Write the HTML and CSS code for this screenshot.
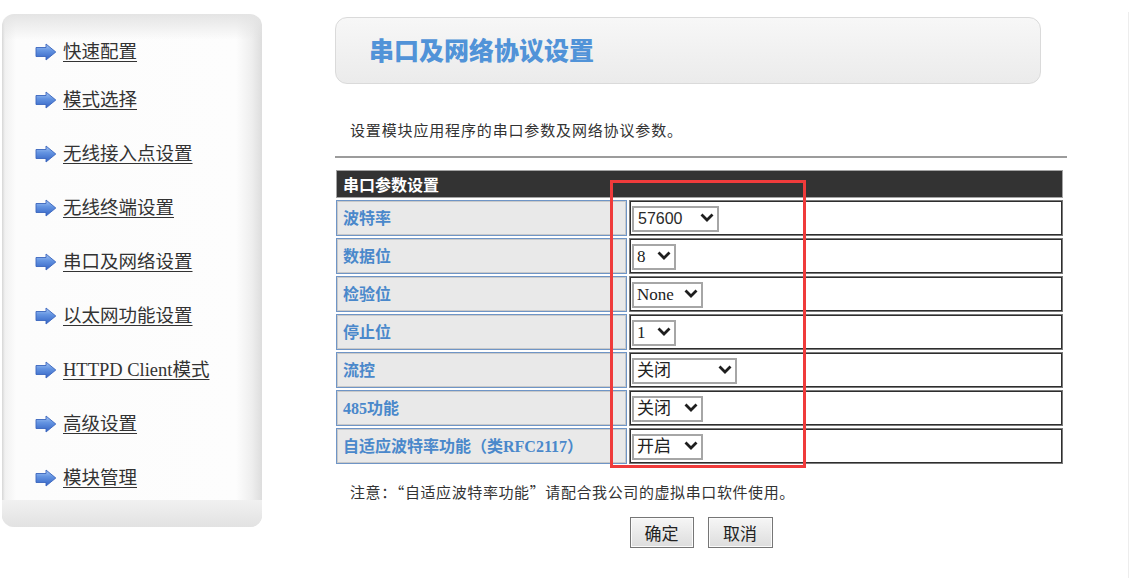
FILE: index.html
```html
<!DOCTYPE html>
<html lang="zh-CN">
<head>
<meta charset="utf-8">
<title>串口及网络协议设置</title>
<link rel="stylesheet" href="styles.css">
</head>
<body>
<svg class="defs" width="0" height="0" aria-hidden="true">
  <defs>
    <linearGradient id="arrowGrad" x1="0" y1="0" x2="0" y2="1">
      <stop offset="0" stop-color="#a6c6f4"/>
      <stop offset="0.4" stop-color="#6595e2"/>
      <stop offset="1" stop-color="#3262c4"/>
    </linearGradient>
  </defs>
</svg>
<div class="page">
  <aside class="sidebar">
    <ul class="nav">
      <li class="first"><a href="#"><svg class="arrow" viewBox="0 0 22 18"><path d="M1 4.5H11V1L20.8 9L11 17V13.5H1Z" fill="url(#arrowGrad)" stroke="#3a65bd" stroke-width="0.9" stroke-linejoin="round"/></svg><span>快速配置</span></a></li>
      <li><a href="#"><svg class="arrow" viewBox="0 0 22 18"><path d="M1 4.5H11V1L20.8 9L11 17V13.5H1Z" fill="url(#arrowGrad)" stroke="#3a65bd" stroke-width="0.9" stroke-linejoin="round"/></svg><span>模式选择</span></a></li>
      <li><a href="#"><svg class="arrow" viewBox="0 0 22 18"><path d="M1 4.5H11V1L20.8 9L11 17V13.5H1Z" fill="url(#arrowGrad)" stroke="#3a65bd" stroke-width="0.9" stroke-linejoin="round"/></svg><span>无线接入点设置</span></a></li>
      <li><a href="#"><svg class="arrow" viewBox="0 0 22 18"><path d="M1 4.5H11V1L20.8 9L11 17V13.5H1Z" fill="url(#arrowGrad)" stroke="#3a65bd" stroke-width="0.9" stroke-linejoin="round"/></svg><span>无线终端设置</span></a></li>
      <li><a href="#"><svg class="arrow" viewBox="0 0 22 18"><path d="M1 4.5H11V1L20.8 9L11 17V13.5H1Z" fill="url(#arrowGrad)" stroke="#3a65bd" stroke-width="0.9" stroke-linejoin="round"/></svg><span>串口及网络设置</span></a></li>
      <li><a href="#"><svg class="arrow" viewBox="0 0 22 18"><path d="M1 4.5H11V1L20.8 9L11 17V13.5H1Z" fill="url(#arrowGrad)" stroke="#3a65bd" stroke-width="0.9" stroke-linejoin="round"/></svg><span>以太网功能设置</span></a></li>
      <li><a href="#"><svg class="arrow" viewBox="0 0 22 18"><path d="M1 4.5H11V1L20.8 9L11 17V13.5H1Z" fill="url(#arrowGrad)" stroke="#3a65bd" stroke-width="0.9" stroke-linejoin="round"/></svg><span>HTTPD Client模式</span></a></li>
      <li><a href="#"><svg class="arrow" viewBox="0 0 22 18"><path d="M1 4.5H11V1L20.8 9L11 17V13.5H1Z" fill="url(#arrowGrad)" stroke="#3a65bd" stroke-width="0.9" stroke-linejoin="round"/></svg><span>高级设置</span></a></li>
      <li><a href="#"><svg class="arrow" viewBox="0 0 22 18"><path d="M1 4.5H11V1L20.8 9L11 17V13.5H1Z" fill="url(#arrowGrad)" stroke="#3a65bd" stroke-width="0.9" stroke-linejoin="round"/></svg><span>模块管理</span></a></li>
    </ul>
    <div class="sidebar-foot"></div>
  </aside>

  <main class="main">
    <div class="title-box"><h1>串口及网络协议设置</h1></div>
    <p class="desc">设置模块应用程序的串口参数及网络协议参数。</p>
    <hr class="rule">
    <div class="form-wrap">
      <div class="grid">
        <div class="grid-head">串口参数设置</div>

        <div class="lbl">波特率</div>
        <div class="val"><span class="sel w87"><select class="sans"><option>57600</option><option>115200</option><option>9600</option></select><svg class="chev" viewBox="0 0 14 9"><path d="M1.5 1.5L7 7L12.5 1.5" fill="none" stroke="#1e1e1e" stroke-width="2.8"/></svg></span></div>

        <div class="lbl">数据位</div>
        <div class="val"><span class="sel w44"><select><option>8</option><option>7</option></select><svg class="chev" viewBox="0 0 14 9"><path d="M1.5 1.5L7 7L12.5 1.5" fill="none" stroke="#1e1e1e" stroke-width="2.8"/></svg></span></div>

        <div class="lbl">检验位</div>
        <div class="val"><span class="sel w71"><select><option>None</option><option>Odd</option><option>Even</option></select><svg class="chev" viewBox="0 0 14 9"><path d="M1.5 1.5L7 7L12.5 1.5" fill="none" stroke="#1e1e1e" stroke-width="2.8"/></svg></span></div>

        <div class="lbl">停止位</div>
        <div class="val"><span class="sel w44"><select><option>1</option><option>2</option></select><svg class="chev" viewBox="0 0 14 9"><path d="M1.5 1.5L7 7L12.5 1.5" fill="none" stroke="#1e1e1e" stroke-width="2.8"/></svg></span></div>

        <div class="lbl">流控</div>
        <div class="val"><span class="sel w105"><select><option>关闭</option><option>开启</option></select><svg class="chev" viewBox="0 0 14 9"><path d="M1.5 1.5L7 7L12.5 1.5" fill="none" stroke="#1e1e1e" stroke-width="2.8"/></svg></span></div>

        <div class="lbl">485功能</div>
        <div class="val"><span class="sel w71"><select><option>关闭</option><option>开启</option></select><svg class="chev" viewBox="0 0 14 9"><path d="M1.5 1.5L7 7L12.5 1.5" fill="none" stroke="#1e1e1e" stroke-width="2.8"/></svg></span></div>

        <div class="lbl">自适应波特率功能（类RFC2117）</div>
        <div class="val"><span class="sel w71"><select><option>开启</option><option>关闭</option></select><svg class="chev" viewBox="0 0 14 9"><path d="M1.5 1.5L7 7L12.5 1.5" fill="none" stroke="#1e1e1e" stroke-width="2.8"/></svg></span></div>
      </div>
      <div class="highlight"></div>
    </div>
    <p class="note">注意：“自适应波特率功能”请配合我公司的虚拟串口软件使用。</p>
    <div class="buttons">
      <button type="button" class="btn">确定</button>
      <button type="button" class="btn">取消</button>
    </div>
  </main>
</div>
</body>
</html>
```

FILE: styles.css
```css
html, body {
  margin: 0;
  padding: 0;
  background: #ffffff;
}

body {
  font-family: "Noto Sans CJK SC", "Noto Sans", sans-serif;
  color: #333333;
}

.defs {
  position: absolute;
  width: 0;
  height: 0;
  overflow: hidden;
}

.page {
  display: flex;
  align-items: flex-start;
  width: 1128px;
  min-height: 566px;
  margin-top: 12px;
  border-right: 1px solid #ededed;
}

/* ---------- Sidebar ---------- */
.sidebar {
  width: 260px;
  margin: 2px 0 0 2px;
  border-radius: 12px;
  overflow: hidden;
  background:
    linear-gradient(to bottom, #e4e4e4 0, rgba(253, 253, 253, 0) 26px),
    linear-gradient(to right, #d6d6d6 0, #f1f1f1 3px, #fcfcfc 14px, #fdfdfd 234px, #eeeeee 250px, #dddddd 260px);
}

.nav {
  list-style: none;
  margin: 0;
  padding: 26px 0 10px 33px;
}

.nav li {
  height: 24px;
  margin-top: 30px;
}

.nav li.first {
  margin-top: 0;
}

.nav li:nth-child(2) {
  margin-top: 24px;
}

.nav a {
  display: flex;
  align-items: center;
  gap: 6px;
  height: 24px;
  color: #333333;
  font-family: "Liberation Serif", "Noto Sans CJK SC", serif;
  font-size: 18.5px;
  line-height: 24px;
  text-decoration: underline;
  text-underline-offset: 3px;
  white-space: nowrap;
}

.arrow {
  width: 22px;
  height: 18px;
  flex: none;
}

.sidebar-foot {
  height: 27px;
  background: linear-gradient(to bottom, #f1f1f1, #e2e2e2);
}

/* ---------- Main ---------- */
.main {
  width: 732px;
  margin-left: 73px;
  margin-top: 5px;
}

.title-box {
  box-sizing: border-box;
  width: 706px;
  height: 67px;
  border: 1px solid #dadada;
  border-radius: 12px;
  background: linear-gradient(to bottom, #f7f7f7, #ebebeb);
  display: flex;
  align-items: center;
  padding-left: 33px;
}

.title-box h1 {
  margin: 0;
  font-size: 25px;
  font-weight: 900;
  color: #5193d8;
  letter-spacing: 0;
  line-height: 30px;
  padding-bottom: 4px;
}

.desc {
  margin: 36px 0 0 15px;
  font-size: 15px;
  letter-spacing: 0.85px;
  line-height: 20px;
  color: #333333;
}

.rule {
  margin: 16px 0 0 0;
  height: 0;
  border: 0;
  border-top: 2px solid #9c9c9c;
}

.form-wrap {
  position: relative;
  margin-top: 12px;
}

.grid {
  display: grid;
  grid-template-columns: 291px 434px;
  grid-template-rows: 28px repeat(7, 36px);
  gap: 2px;
  width: 727px;
  margin-left: 1px;
}

.grid-head {
  grid-column: 1 / -1;
  box-sizing: border-box;
  background: #333333;
  border: 1px solid #a4a4a4;
  color: #ffffff;
  font-weight: 700;
  font-size: 16px;
  line-height: 26px;
  padding-left: 6px;
}

.lbl {
  box-sizing: border-box;
  display: flex;
  align-items: center;
  padding: 0 0 3px 6px;
  background: #e9e9e9;
  border: 1px solid #6f95c6;
  box-shadow: inset 0 0 0 1px #c9c9c9;
  color: #4a88cb;
  font-family: "Liberation Serif", "Noto Sans CJK SC", serif;
  font-weight: 700;
  font-size: 16px;
  white-space: nowrap;
}

.val {
  box-sizing: border-box;
  display: flex;
  align-items: center;
  padding-left: 2px;
  background: #ffffff;
  border: 1px solid #7a7a7a;
  box-shadow: inset 0 0 0 1px #2e2e2e;
}

.sel {
  position: relative;
  display: inline-block;
  height: 26px;
}

.sel select {
  -webkit-appearance: none;
  appearance: none;
  box-sizing: border-box;
  height: 26px;
  width: 100%;
  margin: 0;
  padding: 0 0 0 3px;
  border: 2px solid #a6a6a6;
  border-radius: 0;
  background: #ffffff;
  color: #222222;
  font-family: "Liberation Serif", "Noto Sans CJK SC", serif;
  font-size: 17px;
  outline: none;
}

.sel select.sans {
  font-family: "Liberation Sans", sans-serif;
  font-size: 16px;
  padding-left: 4px;
  color: #2a2a2a;
}

.sel .chev {
  position: absolute;
  right: 5px;
  top: 8px;
  width: 14px;
  height: 9px;
  pointer-events: none;
}

.w44 { width: 44px; }
.w71 { width: 71px; }
.w87 { width: 87px; }
.w105 { width: 105px; }

.highlight {
  position: absolute;
  left: 275px;
  top: 10px;
  width: 196px;
  height: 288px;
  box-sizing: border-box;
  border: 3px solid #ef3b3b;
  pointer-events: none;
}

.note {
  margin: 18px 0 0 15px;
  font-size: 15px;
  letter-spacing: 0.6px;
  line-height: 20px;
  color: #333333;
}

.buttons {
  display: flex;
  justify-content: center;
  gap: 14px;
  margin-top: 15px;
}

.btn {
  box-sizing: border-box;
  width: 64px;
  height: 31px;
  padding: 0;
  border: 1px solid #767676;
  box-shadow: inset 0 0 0 1px #fbfbfb;
  background: linear-gradient(to bottom, #f6f6f6, #dddddd);
  color: #222222;
  font-family: "Noto Sans CJK SC", sans-serif;
  font-size: 17px;
  line-height: 29px;
  border-radius: 0;
}

.btn + .btn {
  width: 65px;
}
```
